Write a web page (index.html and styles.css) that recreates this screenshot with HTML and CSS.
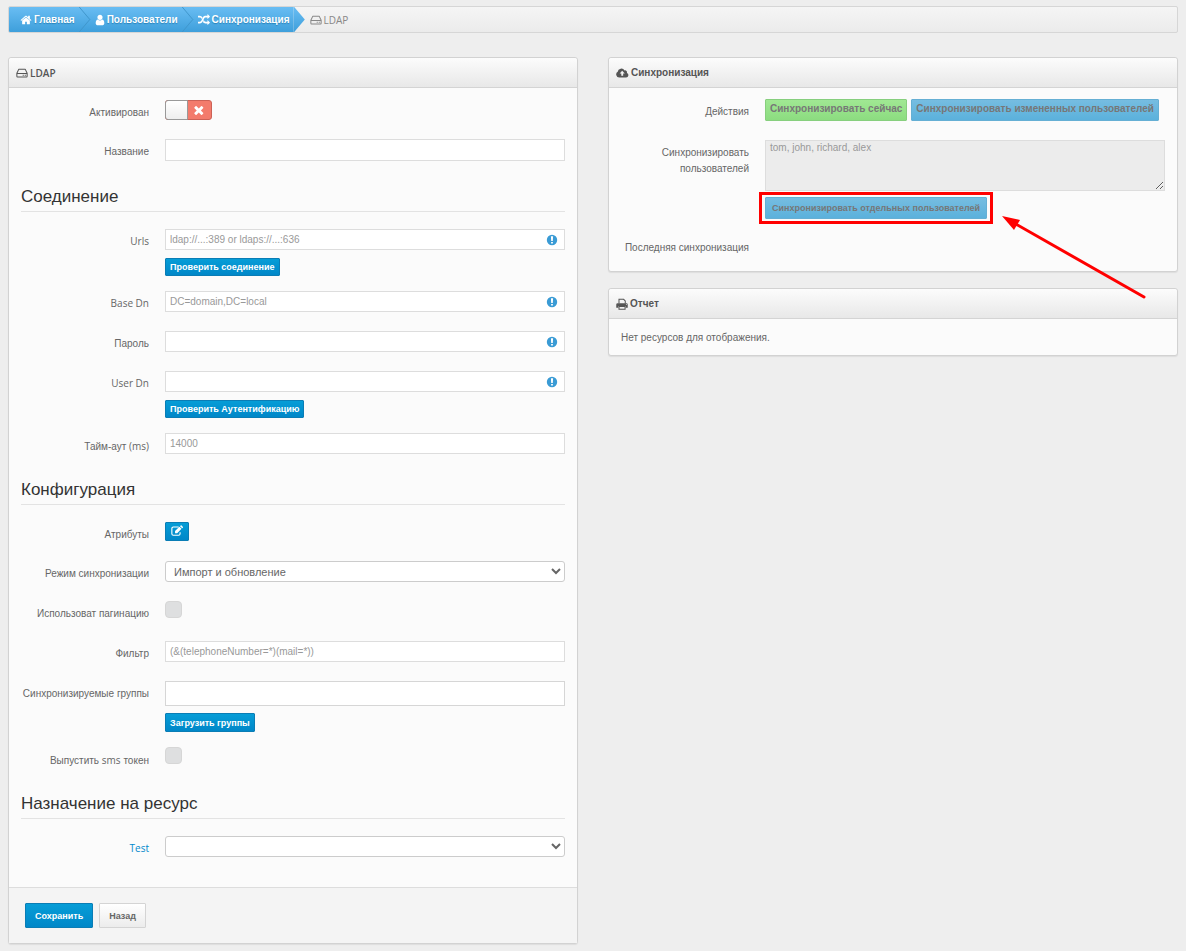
FILE: index.html
```html
<!DOCTYPE html>
<html lang="ru">
<head>
<meta charset="utf-8">
<title>LDAP</title>
<link rel="stylesheet" href="styles.css">
</head>
<body>
<svg class="defs" aria-hidden="true">
  <linearGradient id="crumb-fill" x1="0" y1="0" x2="0" y2="1"><stop offset="0" stop-color="#69bdf3"/><stop offset="1" stop-color="#3e9fdb"/></linearGradient>
  <symbol id="i-home" viewBox="0 0 1792 1792"><path d="M1472 992v480q0 26-19 45t-45 19h-384v-384h-256v384h-384q-26 0-45-19t-19-45v-480q0-1 .5-3t.5-3l575-474 575 474q1 2 1 6zm223-69l-62 74q-8 9-21 11h-3q-13 0-21-7l-692-577-692 577q-12 8-24 7-13-2-21-11l-62-74q-8-10-7-23.5t11-21.5l719-599q32-26 76-26t76 26l244 204v-195q0-14 9-23t23-9h192q14 0 23 9t9 23v408l219 182q10 8 11 21.5t-7 23.5z"/></symbol>
  <symbol id="i-user" viewBox="192 0 1408 1792"><path d="M1536 1399q0 109-62.5 187t-150.5 78h-854q-88 0-150.5-78t-62.5-187q0-85 8.5-160.5t31.500-152 58.500-131 94-89 134.500-34.500q131 128 313 128t313-128q76 0 134.500 34.500t94 89 58.500 131 31.500 152 8.500 160.500zm-256-887q0 159-112.500 271.500t-271.500 112.500-271.500-112.500-112.500-271.500 112.500-271.500 271.500-112.500 271.500 112.500 112.500 271.500z"/></symbol>
  <symbol id="i-random" viewBox="0 0 1792 1792"><path d="M666 481q-60 92-137 273-22-45-37-72.500t-40.500-63.500-51-56.500-63-35-81.500-14.500h-224q-14 0-23-9t-9-23v-192q0-14 9-23t23-9h224q250 0 410 225zm1126 799q0 14-9 23l-320 320q-9 9-23 9-13 0-22.500-9.500t-9.500-22.500v-192q-32 0-85 .5t-81 1-73-1-71-5-64-10.500-63-18.500-58-28.500-59-40-55-53.500-56-69.500q59-93 136-273 22 45 37 72.500t40.500 63.500 51 56.500 63 35 81.500 14.500h256v-192q0-14 9-23t23-9q12 0 24 10l319 319q9 9 9 23zm0-896q0 14-9 23l-320 320q-9 9-23 9-13 0-22.500-9.500t-9.500-22.500v-192h-256q-48 0-87 15t-69 45-51 61.500-45 77.500q-32 62-78 171-29 66-49.500 111t-54 105-64 100-74 83-90 68.500-106.500 42-128 16.500h-224q-14 0-23-9t-9-23v-192q0-14 9-23t23-9h224q48 0 87-15t69-45 51-61.500 45-77.500q32-62 78-171 29-66 49.500-111t54-105 64-100 74-83 90-68.500 106.500-42 128-16.500h256v-192q0-14 9-23t23-9q12 0 24 10l319 319q9 9 9 23z"/></symbol>
  <symbol id="i-hdd" viewBox="0 0 14 14"><path d="M3.300 2.500h7.400L13 7.400v3.400a.8.8 0 0 1-.8.8H1.800a.8.8 0 0 1-.8-.8V7.400zM1 7.500h12" fill="none" stroke="currentColor" stroke-width="1.200" stroke-linejoin="round"/><path d="M7.800 9h1.300v1.200H7.800zM10.200 9h1.300v1.200h-1.300z"/></symbol>
  <symbol id="i-cloud" viewBox="0 0 16 14"><path fill-rule="evenodd" d="M12.400 12.500H4a3.700 3.700 0 0 1-1.900-6.900A4.500 4.500 0 0 1 10.500 3.900a2.300 2.300 0 0 1 2.900 3A2.900 2.900 0 0 1 12.400 12.500zM7.600 4.200 4.500 7.500h2v3h2.300v-3h2z"/></symbol>
  <symbol id="i-print" viewBox="0 0 14 14"><path d="M3.500 6.500v-5h5.400l1.900 1.900v3.100M3.500 10h7.100v3H3.500z" fill="none" stroke="currentColor" stroke-width="1.200"/><path fill-rule="evenodd" d="M1.900 6h10.200A1.600 1.600 0 0 1 13.700 7.600v3.900h-2.400V9.400H2.800v2.100H.3V7.600A1.600 1.600 0 0 1 1.900 6zm9.700 1v1h1V7z"/></symbol>
  <symbol id="i-edit" viewBox="0 0 14 14"><path d="M9 2.400H2.700A1.700 1.700 0 0 0 1 4.100v6.200A1.700 1.700 0 0 0 2.700 12h6.200a1.700 1.700 0 0 0 1.700-1.700V8.600" fill="none" stroke="currentColor" stroke-width="1.300"/><path d="M4.700 9.600V7.100l5.100-5.100 2.500 2.500-5.100 5.100zM10.500 1.400l.7-.7a.8.8 0 0 1 1.200 0l1.300 1.300a.8.8 0 0 1 0 1.200l-.7.7z"/></symbol>
  <symbol id="i-info" viewBox="0 0 12 12"><circle cx="6" cy="6" r="5.200"/><path d="M4.900 2.200h2.200L6.800 7H5.200zM5.100 7.900h1.800v1.700H5.100z" fill="#fff"/></symbol>
  <symbol id="i-times" viewBox="0 0 1792 1792"><path d="M1490 1322q0 40-28 68l-136 136q-28 28-68 28t-68-28l-294-294-294 294q-28 28-68 28t-68-28l-136-136q-28-28-28-68t28-68l294-294-294-294q-28-28-28-68t28-68l136-136q28-28 68-28t68 28l294 294 294-294q28-28 68-28t68 28l136 136q28 28 28 68t-28 68l-294 294 294 294q28 28 28 68z"/></symbol>
</svg>

<nav class="breadcrumb" aria-label="Навигация">
  <a class="crumb" href="#"><svg class="icon"><use href="#i-home"/></svg>Главная<svg class="sep" viewBox="0 0 14 26"><path class="sep-fill" d="M0 0h1l11 13L1 26H0z"/><path class="sep-line" d="M1 0l11 13L1 26"/></svg></a>
  <a class="crumb" href="#"><svg class="icon icon-user"><use href="#i-user"/></svg>Пользователи<svg class="sep" viewBox="0 0 14 26"><path class="sep-fill" d="M0 0h1l11 13L1 26H0z"/><path class="sep-line" d="M1 0l11 13L1 26"/></svg></a>
  <a class="crumb" href="#"><svg class="icon"><use href="#i-random"/></svg>Синхронизация<svg class="sep" viewBox="0 0 14 26"><path class="sep-fill" d="M0 0h1l11 13L1 26H0z"/></svg></a>
  <span class="current"><svg class="icon"><use href="#i-hdd"/></svg>LDAP</span>
</nav>

<main class="columns">
  <form class="card">
    <h2 class="card-title latin"><svg class="icon"><use href="#i-hdd"/></svg>LDAP</h2>
    <div class="card-body">
      <div class="row">
        <label class="label" for="active">Активирован</label>
        <div class="field"><span class="switch"><input type="checkbox" id="active"><svg class="switch-x"><use href="#i-times"/></svg></span></div>
      </div>
      <div class="row">
        <label class="label" for="name">Название</label>
        <div class="field"><input class="input tall" type="text" id="name"></div>
      </div>

      <h3 class="legend">Соединение</h3>
      <div class="row">
        <label class="label latin" for="urls">Urls</label>
        <div class="field"><div class="hinted"><input class="input" type="text" id="urls" placeholder="ldap://...:389 or ldaps://...:636"><svg class="hint"><use href="#i-info"/></svg></div>
        <button class="btn small" type="button">Проверить соединение</button></div>
      </div>
      <div class="row">
        <label class="label latin" for="base">Base Dn</label>
        <div class="field"><div class="hinted"><input class="input" type="text" id="base" placeholder="DC=domain,DC=local"><svg class="hint"><use href="#i-info"/></svg></div></div>
      </div>
      <div class="row">
        <label class="label" for="pass">Пароль</label>
        <div class="field"><div class="hinted"><input class="input" type="password" id="pass"><svg class="hint"><use href="#i-info"/></svg></div></div>
      </div>
      <div class="row">
        <label class="label latin" for="user">User Dn</label>
        <div class="field"><div class="hinted"><input class="input" type="text" id="user"><svg class="hint"><use href="#i-info"/></svg></div>
        <button class="btn small" type="button">Проверить Аутентификацию</button></div>
      </div>
      <div class="row">
        <label class="label" for="timeout">Тайм-аут <span class="latin">(ms)</span></label>
        <div class="field"><input class="input" type="text" id="timeout" placeholder="14000"></div>
      </div>

      <h3 class="legend">Конфигурация</h3>
      <div class="row">
        <label class="label" for="attrs">Атрибуты</label>
        <div class="field"><button class="btn square" type="button" id="attrs" aria-label="Атрибуты"><svg class="icon"><use href="#i-edit"/></svg></button></div>
      </div>
      <div class="row">
        <label class="label" for="mode">Режим синхронизации</label>
        <div class="field"><select class="select" id="mode"><option>Импорт и обновление</option></select></div>
      </div>
      <div class="row">
        <label class="label" for="paging">Использоват пагинацию</label>
        <div class="field tick"><input class="check" type="checkbox" id="paging"></div>
      </div>
      <div class="row">
        <label class="label" for="filter">Фильтр</label>
        <div class="field"><input class="input" type="text" id="filter" placeholder="(&amp;(telephoneNumber=*)(mail=*))"></div>
      </div>
      <div class="row">
        <label class="label" for="groups">Синхронизируемые группы</label>
        <div class="field"><input class="input groups" type="text" id="groups">
        <button class="btn small" type="button">Загрузить группы</button></div>
      </div>
      <div class="row">
        <label class="label" for="sms">Выпустить <span class="latin">sms</span> токен</label>
        <div class="field tick"><input class="check" type="checkbox" id="sms"></div>
      </div>

      <h3 class="legend">Назначение на ресурс</h3>
      <div class="row">
        <div class="label latin"><a class="link" href="#" id="test-label">Test</a></div>
        <div class="field"><select class="select" aria-labelledby="test-label"><option></option></select></div>
      </div>
    </div>
    <div class="card-footer">
      <button class="btn large" type="submit">Сохранить</button>
      <button class="btn large plain" type="button">Назад</button>
    </div>
  </form>

  <div class="side">
    <section class="card">
      <h2 class="card-title"><svg class="icon icon-wide"><use href="#i-cloud"/></svg>Синхронизация</h2>
      <div class="card-body compact">
        <div class="row">
          <div class="label">Действия</div>
          <div class="field actions">
            <button class="btn action green" type="button" disabled>Синхронизировать сейчас</button>
            <button class="btn action blue" type="button" disabled>Синхронизировать измененных пользователей</button>
          </div>
        </div>
        <div class="row">
          <label class="label" for="users">Синхронизировать пользователей</label>
          <div class="field">
            <textarea class="textarea" id="users" placeholder="tom, john, richard, alex" disabled></textarea>
            <div class="callout">
              <button class="btn action single blue" type="button" disabled>Синхронизировать отдельных пользователей</button>
              <svg class="arrow" viewBox="0 0 144 84"><path d="M142 81 12 7" fill="none" stroke="#f00" stroke-width="3" stroke-linecap="round"/><path d="M0 0 18 4 12 14z" fill="#f00"/></svg>
            </div>
          </div>
        </div>
        <div class="row">
          <div class="label">Последняя синхронизация</div>
          <div class="field"></div>
        </div>
      </div>
    </section>
    <section class="card">
      <h2 class="card-title"><svg class="icon"><use href="#i-print"/></svg>Отчет</h2>
      <p class="empty">Нет ресурсов для отображения.</p>
    </section>
  </div>
</main>
</body>
</html>
```

FILE: styles.css
```css
* { box-sizing: border-box; }
body {
  margin: 0;
  padding: 6px 8px;
  background: #eee;
  color: #666;
  font: 10px/16px "Liberation Sans", Arial, sans-serif;
}
.defs { position: absolute; width: 0; height: 0; }
.latin { font-family: "Open Sans", "Liberation Sans", sans-serif; }
.icon { width: 12px; height: 12px; fill: currentColor; flex: none; }
.icon-user { width: 10px; }
.icon-wide { width: 13px; }

.breadcrumb {
  display: flex;
  height: 27px;
  border: 1px solid #d6d6d6;
  border-radius: 2px;
  background: linear-gradient(#f5f5f5, #ebebeb);
  overflow: hidden;
}
.crumb {
  position: relative;
  display: flex;
  align-items: center;
  gap: 2px;
  padding: 0 3px 0 17px;
  background: linear-gradient(#69bdf3, #3e9fdb);
  color: #fff;
  font-weight: bold;
  text-decoration: none;
  text-shadow: 0 1px 1px #2a84bb;
}
.crumb:first-child { padding-left: 11px; }
.sep { position: absolute; z-index: 1; left: 100%; top: 0; width: 14px; height: 25px; }
.sep-fill { fill: url(#crumb-fill); }
.sep-line { fill: none; stroke: #3f96cb; }
.current {
  display: flex;
  align-items: center;
  gap: 2px;
  padding-left: 17px;
  color: #888;
  font-family: "Open Sans", sans-serif;
}

.columns {
  display: grid;
  grid-template-columns: 1fr 1fr;
  gap: 30px;
  align-items: start;
  margin-top: 24px;
}
.side { display: grid; gap: 16px; }
.card {
  border: 1px solid #d2d2d2;
  border-radius: 3px;
  background: #fbfbfb;
  box-shadow: 0 1px 1px #ddd;
}
.card-title {
  display: flex;
  align-items: center;
  gap: 2px;
  height: 30px;
  margin: 0;
  padding: 0 7px;
  border-bottom: 1px solid #d4d4d4;
  border-radius: 3px 3px 0 0;
  background: linear-gradient(#fcfcfc, #e8e8e8);
  color: #555;
  font-size: 10px;
}
.card-title.latin { font-weight: 600; }
.card-body { padding: 12px 12px 11px; }
.card-body.compact { padding: 11px 12px 0; }
.row {
  display: grid;
  grid-template-columns: 128px 1fr;
  gap: 16px;
  padding-bottom: 19px;
}
.compact .row:last-child { padding-bottom: 16px; }
.label { margin-bottom: -1px; padding-top: 5px; text-align: right; }
.label.latin { margin-bottom: 0; padding-top: 4px; }
.link { color: #08c; text-decoration: none; }
.field { min-width: 0; }
.legend {
  height: 32px;
  margin: 0 0 17px;
  border-bottom: 1px solid #e3e3e3;
  color: #333;
  font-size: 17px;
  font-weight: normal;
  line-height: 34px;
}
.input, .select, .textarea {
  display: block;
  width: 100%;
  height: 21px;
  margin: 0;
  padding: 0 4px;
  border: 1px solid #ddd;
  border-radius: 0;
  background: #fff;
  color: #666;
  font: 10px/14px "Liberation Sans", Arial, sans-serif;
}
.input::placeholder, .textarea::placeholder { color: #999; opacity: 1; }
.input.tall { height: 22px; }
.input.groups { height: 25px; border-color: #d6d6d6; }
.select {
  padding: 0 4px;
  border-color: #ccc;
  border-radius: 3px;
  font-size: 11px;
}
.textarea { height: 51px; background: #ececec; resize: vertical; }
.hinted { position: relative; }
.hint { position: absolute; right: 7px; top: 5px; width: 12px; height: 12px; fill: #3a9bd5; }
.switch {
  position: relative;
  display: flex;
  width: 47px;
  height: 20px;
  border: 1px solid #cc6156;
  border-radius: 3px;
  background: #f37b6c;
}
.switch input {
  appearance: none;
  width: 24px;
  height: 20px;
  margin: -1px;
  border: 1px solid #999;
  border-radius: 3px 0 0 3px;
  background: linear-gradient(#fff, #eee);
}
.switch-x { width: 14px; height: 14px; margin: 2px 5px; fill: #fff; }
.tick { height: 21px; }
.check {
  appearance: none;
  display: block;
  width: 17px;
  height: 17px;
  margin: 0;
  border: 1px solid #d6d6d6;
  border-radius: 4px;
  background: #dedfe0;
}

.btn {
  display: block;
  border: 1px solid #0a7db5;
  border-radius: 1px;
  background: linear-gradient(#069dd7, #0087c8);
  color: #fff;
  font: bold 9px/12px "Liberation Sans", Arial, sans-serif;
  white-space: nowrap;
}
.btn.small { height: 18px; margin-top: 8px; padding: 0 4px; }
.input.groups + .small { height: 19px; margin-top: 7px; }
.field:has(.small) { margin-bottom: -4px; }
.btn.square { height: 19px; padding: 2px 5px; }
.btn.large { height: 25px; padding: 0 9px; }
.btn.plain {
  border-color: #d4d4d4;
  background: linear-gradient(#fff, #ececec);
  color: #666;
}
.btn.action { height: 22px; padding: 0 4px 2px; color: #777; font-size: 10px; }
.btn.green { border-color: #87cf7e; background: linear-gradient(#a0e893, #8cdc80); }
.btn.blue { border-color: #65afd4; background: linear-gradient(#76bde1, #5bb1dc); }
.btn.single { padding: 0 6px 1px; font-size: 9px; }
.actions { display: flex; gap: 4px; }
.callout { position: relative; width: fit-content; margin: 6px 0 -3px; }
.callout::before {
  content: "";
  position: absolute;
  inset: -5px -6px;
  border: 3px solid #f00;
}
.arrow { position: absolute; left: calc(100% + 15px); top: 19px; width: 144px; height: 84px; }
.empty { margin: 0; padding: 11px 12px 9px; }
.card-footer {
  display: flex;
  gap: 6px;
  padding: 15px 16px;
  border-top: 1px solid #ddd;
  background: #f4f4f4;
}
```
